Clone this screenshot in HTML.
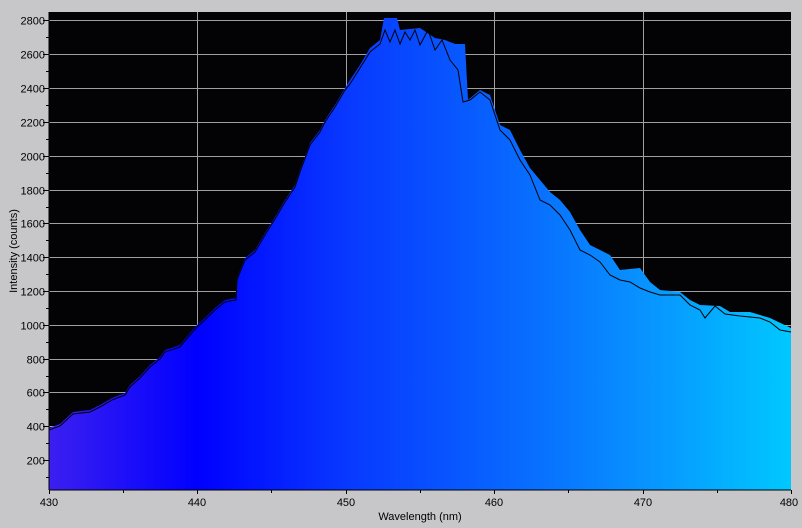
<!DOCTYPE html>
<html><head><style>
body{margin:0;width:802px;height:528px;background:#c7c6c9;overflow:hidden;font-family:"Liberation Sans",sans-serif}
svg{position:absolute;left:0;top:0}
text{font-size:11px;fill:#000}
</style></head><body>
<svg width="802" height="528">
<defs>
<linearGradient id="g" x1="49" x2="791" y1="0" y2="0" gradientUnits="userSpaceOnUse">
<stop offset="0" stop-color="#3c1ff0"/>
<stop offset="0.2" stop-color="#0000ff"/>
<stop offset="0.4" stop-color="#0838ff"/>
<stop offset="0.6" stop-color="#0862ff"/>
<stop offset="0.8" stop-color="#0892ff"/>
<stop offset="1" stop-color="#00c8ff"/>
</linearGradient>
</defs>
<rect x="49" y="12" width="742" height="478" fill="#030204"/>
<g stroke="#a0a0a0" stroke-width="1">
<line x1="197.5" y1="12" x2="197.5" y2="490"/><line x1="346.5" y1="12" x2="346.5" y2="490"/><line x1="494.5" y1="12" x2="494.5" y2="490"/><line x1="643.5" y1="12" x2="643.5" y2="490"/>
<line x1="49" x2="791" y1="20.5" y2="20.5"/><line x1="49" x2="791" y1="54.5" y2="54.5"/><line x1="49" x2="791" y1="88.5" y2="88.5"/><line x1="49" x2="791" y1="122.5" y2="122.5"/><line x1="49" x2="791" y1="156.5" y2="156.5"/><line x1="49" x2="791" y1="190.5" y2="190.5"/><line x1="49" x2="791" y1="223.5" y2="223.5"/><line x1="49" x2="791" y1="257.5" y2="257.5"/><line x1="49" x2="791" y1="291.5" y2="291.5"/><line x1="49" x2="791" y1="325.5" y2="325.5"/><line x1="49" x2="791" y1="359.5" y2="359.5"/><line x1="49" x2="791" y1="392.5" y2="392.5"/><line x1="49" x2="791" y1="426.5" y2="426.5"/><line x1="49" x2="791" y1="460.5" y2="460.5"/>
</g>
<polygon fill="url(#g)" points="49,490 49,428 60,424 73,412 90,410 100,405 112,398 125,393 130,385 140,376 150,365 160,357 165,350 180,345 190,333 197,325 205,318 215,308 225,300 236,298 237,278 245,258 255,250 265,233 275,217 285,200 295,185 300,170 310,143 320,130 325,120 335,105 345,88 350,80 360,65 370,48 380,40 384,18 397,18 400,30 420,28 435,38 445,40 455,44 465,44 468,100 480,90 490,95 500,125 510,130 520,150 530,168 540,180 550,192 560,200 570,212 580,230 590,245 600,250 610,255 620,270 640,268 650,282 660,290 680,292 690,300 700,305 720,306 730,312 750,312 770,318 791,328 791,490"/>
<polyline fill="none" stroke="#000" stroke-width="1" points="49,430 60,426 73,414 90,412 100,407 112,400 125,395 130,387 140,378 150,367 160,359 165,352 180,347 190,335 197,327 205,320 215,310 225,302 236,300 237,280 245,260 255,252 265,235 275,219 285,202 295,187 300,172 310,145 320,132 325,122 335,107 345,90 350,84 360,68 370,52 380,44 385,30 390,42 395,30 400,44 405,32 410,40 415,30 420,45 428,30 435,50 442,40 450,60 458,70 463,102 470,100 480,92 490,100 500,130 510,140 520,160 530,175 540,200 550,205 560,215 570,230 580,250 590,255 600,262 610,275 620,280 630,282 640,288 650,292 660,295 680,295 690,305 700,310 705,318 715,306 725,314 740,316 760,318 770,322 780,330 791,332"/>
<g stroke="#000">
<line x1="49" y1="12" x2="49" y2="490"/><line x1="49" y1="490" x2="791" y2="490"/>
<g>
<line x1="43" x2="49" y1="20.5" y2="20.5"/><line x1="43" x2="49" y1="54.5" y2="54.5"/><line x1="43" x2="49" y1="88.5" y2="88.5"/><line x1="43" x2="49" y1="122.5" y2="122.5"/><line x1="43" x2="49" y1="156.5" y2="156.5"/><line x1="43" x2="49" y1="190.5" y2="190.5"/><line x1="43" x2="49" y1="223.5" y2="223.5"/><line x1="43" x2="49" y1="257.5" y2="257.5"/><line x1="43" x2="49" y1="291.5" y2="291.5"/><line x1="43" x2="49" y1="325.5" y2="325.5"/><line x1="43" x2="49" y1="359.5" y2="359.5"/><line x1="43" x2="49" y1="392.5" y2="392.5"/><line x1="43" x2="49" y1="426.5" y2="426.5"/><line x1="43" x2="49" y1="460.5" y2="460.5"/>
<line x1="46" x2="49" y1="37.5" y2="37.5"/><line x1="46" x2="49" y1="71.5" y2="71.5"/><line x1="46" x2="49" y1="105.5" y2="105.5"/><line x1="46" x2="49" y1="139.5" y2="139.5"/><line x1="46" x2="49" y1="173.5" y2="173.5"/><line x1="46" x2="49" y1="207.5" y2="207.5"/><line x1="46" x2="49" y1="240.5" y2="240.5"/><line x1="46" x2="49" y1="274.5" y2="274.5"/><line x1="46" x2="49" y1="308.5" y2="308.5"/><line x1="46" x2="49" y1="342.5" y2="342.5"/><line x1="46" x2="49" y1="376.5" y2="376.5"/><line x1="46" x2="49" y1="409.5" y2="409.5"/><line x1="46" x2="49" y1="443.5" y2="443.5"/><line x1="46" x2="49" y1="477.5" y2="477.5"/>
<line x1="49.5" x2="49.5" y1="490" y2="494"/><line x1="123.5" x2="123.5" y1="490" y2="493"/><line x1="197.5" x2="197.5" y1="490" y2="494"/><line x1="271.5" x2="271.5" y1="490" y2="493"/><line x1="346.5" x2="346.5" y1="490" y2="494"/><line x1="420.5" x2="420.5" y1="490" y2="493"/><line x1="494.5" x2="494.5" y1="490" y2="494"/><line x1="568.5" x2="568.5" y1="490" y2="493"/><line x1="643.5" x2="643.5" y1="490" y2="494"/><line x1="717.5" x2="717.5" y1="490" y2="493"/><line x1="791.5" x2="791.5" y1="490" y2="494"/>
</g></g>
<g text-anchor="end">
<text x="45" y="24.5">2800</text><text x="45" y="58.5">2600</text><text x="45" y="92.5">2400</text><text x="45" y="126.5">2200</text><text x="45" y="160.5">2000</text><text x="45" y="194.5">1800</text><text x="45" y="227.5">1600</text><text x="45" y="261.5">1400</text><text x="45" y="295.5">1200</text><text x="45" y="329.5">1000</text><text x="45" y="363.5">800</text><text x="45" y="396.5">600</text><text x="45" y="430.5">400</text><text x="45" y="464.5">200</text>
</g>
<g text-anchor="middle">
<text x="49" y="506">430</text><text x="197" y="506">440</text><text x="346" y="506">450</text><text x="494" y="506">460</text><text x="643" y="506">470</text><text x="789" y="506">480</text>
<text x="420" y="520">Wavelength (nm)</text>
<text transform="translate(17,251) rotate(-90)">Intensity (counts)</text>
</g>
</svg>
</body></html>
